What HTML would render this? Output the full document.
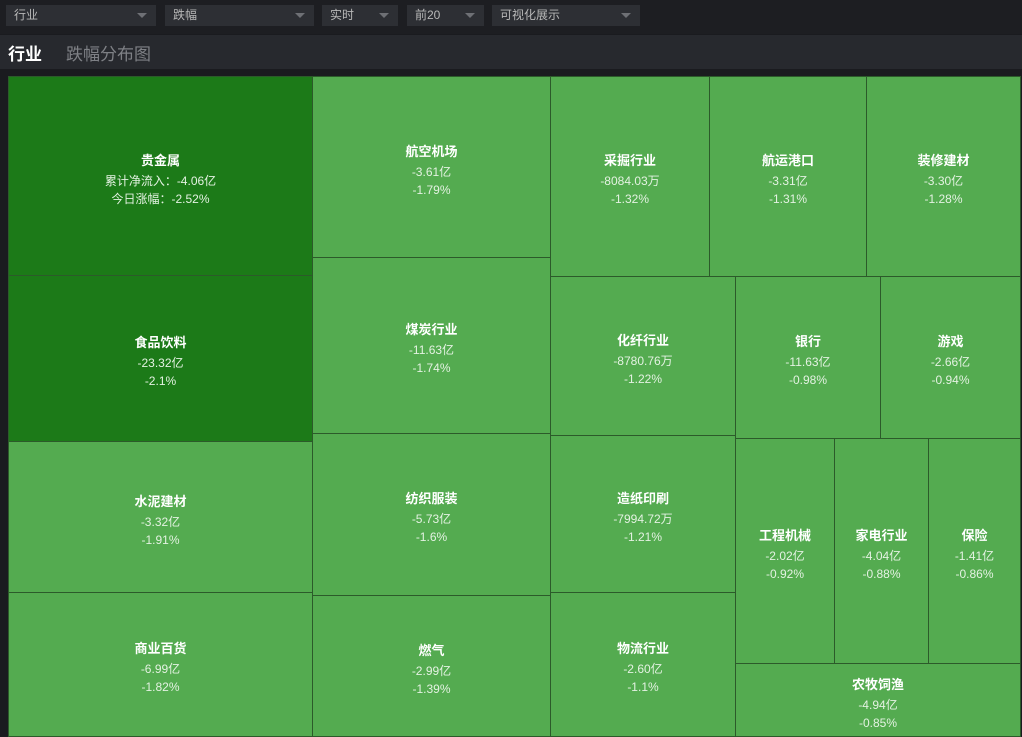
<!DOCTYPE html><html><head><meta charset="utf-8"><style>
body{margin:0;width:1022px;height:736px;overflow:hidden;background:#1a1b1f;font-family:"Liberation Sans","Noto Sans CJK SC",sans-serif;position:relative}
.top{position:absolute;left:0;top:0;width:1022px;height:34px;background:#1d1e22}
.dd{position:absolute;top:5px;height:21px;background:#2d2f34;color:#b8b8b8;font-size:12px;line-height:21px;padding-left:8px;box-sizing:border-box}
.dd:after{content:"";position:absolute;right:9px;top:8px;border-left:5px solid transparent;border-right:5px solid transparent;border-top:5px solid #6e7075}
.tb{position:absolute;left:0;top:35px;width:1022px;height:34px;background:#27292e}
.tb b{position:absolute;left:8px;top:5px;color:#fff;font-size:17px}
.tb span{position:absolute;left:66px;top:5px;color:#7e8085;font-size:17px}
.c{position:absolute;box-sizing:border-box;border:1px solid #2c5a2a;background:#54ab50;display:flex;flex-direction:column;align-items:center;justify-content:center;color:#e4f2e2;font-size:12px;line-height:18px;text-align:center;padding-top:5px}
.c b{color:#fff;font-size:13px;line-height:22px}
.d{background:#1c7a18}
</style></head><body>
<div class="top">
<div class="dd" style="left:6px;width:150px">行业</div>
<div class="dd" style="left:165px;width:149px">跌幅</div>
<div class="dd" style="left:322px;width:76px">实时</div>
<div class="dd" style="left:407px;width:77px">前20</div>
<div class="dd" style="left:492px;width:148px">可视化展示</div>
</div>
<div class="tb"><b>行业</b><span>跌幅分布图</span></div>
<div class="c d" style="left:8px;top:76px;width:305px;height:200px"><b>贵金属</b>累计净流入：-4.06亿<br>今日涨幅：-2.52%</div>
<div class="c d" style="left:8px;top:275px;width:305px;height:167px"><b>食品饮料</b>-23.32亿<br>-2.1%</div>
<div class="c" style="left:8px;top:441px;width:305px;height:152px"><b>水泥建材</b>-3.32亿<br>-1.91%</div>
<div class="c" style="left:8px;top:592px;width:305px;height:145px"><b>商业百货</b>-6.99亿<br>-1.82%</div>
<div class="c" style="left:312px;top:76px;width:239px;height:182px"><b>航空机场</b>-3.61亿<br>-1.79%</div>
<div class="c" style="left:312px;top:257px;width:239px;height:177px"><b>煤炭行业</b>-11.63亿<br>-1.74%</div>
<div class="c" style="left:312px;top:433px;width:239px;height:163px"><b>纺织服装</b>-5.73亿<br>-1.6%</div>
<div class="c" style="left:312px;top:595px;width:239px;height:142px"><b>燃气</b>-2.99亿<br>-1.39%</div>
<div class="c" style="left:550px;top:76px;width:160px;height:201px"><b>采掘行业</b>-8084.03万<br>-1.32%</div>
<div class="c" style="left:709px;top:76px;width:158px;height:201px"><b>航运港口</b>-3.31亿<br>-1.31%</div>
<div class="c" style="left:866px;top:76px;width:155px;height:201px"><b>装修建材</b>-3.30亿<br>-1.28%</div>
<div class="c" style="left:550px;top:276px;width:186px;height:160px"><b>化纤行业</b>-8780.76万<br>-1.22%</div>
<div class="c" style="left:550px;top:435px;width:186px;height:158px"><b>造纸印刷</b>-7994.72万<br>-1.21%</div>
<div class="c" style="left:550px;top:592px;width:186px;height:145px"><b>物流行业</b>-2.60亿<br>-1.1%</div>
<div class="c" style="left:735px;top:276px;width:146px;height:163px"><b>银行</b>-11.63亿<br>-0.98%</div>
<div class="c" style="left:880px;top:276px;width:141px;height:163px"><b>游戏</b>-2.66亿<br>-0.94%</div>
<div class="c" style="left:735px;top:438px;width:100px;height:226px"><b>工程机械</b>-2.02亿<br>-0.92%</div>
<div class="c" style="left:834px;top:438px;width:95px;height:226px"><b>家电行业</b>-4.04亿<br>-0.88%</div>
<div class="c" style="left:928px;top:438px;width:93px;height:226px"><b>保险</b>-1.41亿<br>-0.86%</div>
<div class="c" style="left:735px;top:663px;width:286px;height:74px"><b>农牧饲渔</b>-4.94亿<br>-0.85%</div>
</body></html>
